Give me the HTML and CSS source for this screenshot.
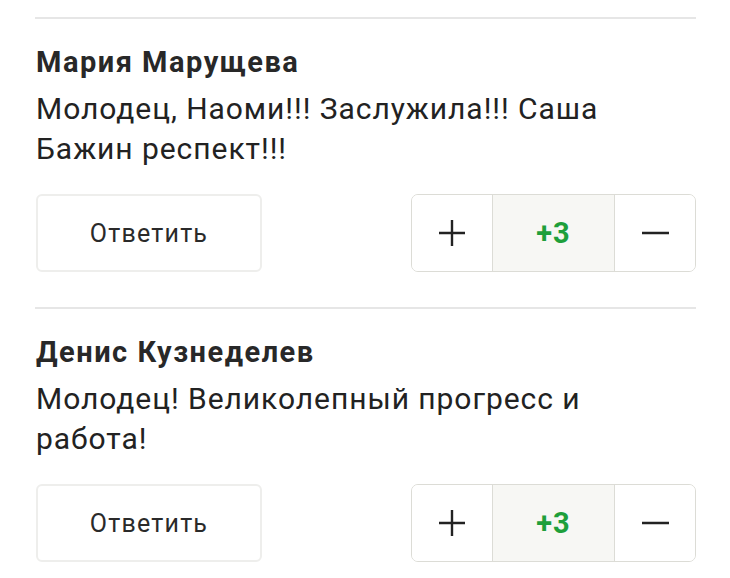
FILE: index.html
```html
<!DOCTYPE html>
<html lang="ru">
<head>
<meta charset="utf-8">
<link rel="stylesheet" href="styles.css">
</head>
<body>
<div class="list">
  <div class="comment">
    <div class="author">Мария Марущева</div>
    <div class="text">Молодец, Наоми!!! Заслужила!!! Саша Бажин респект!!!</div>
    <div class="actions">
      <button class="reply">Ответить</button>
      <div class="vote">
        <button class="vbtn">
          <svg width="28" height="28" viewBox="0 0 28 28"><path d="M14 1v26M1 14h26" stroke="#222" stroke-width="2.4" fill="none"/></svg>
        </button>
        <div class="score">+3</div>
        <button class="vbtn">
          <svg width="28" height="28" viewBox="0 0 28 28"><path d="M1 14h27" stroke="#222" stroke-width="2.6" fill="none"/></svg>
        </button>
      </div>
    </div>
  </div>
  <div class="comment">
    <div class="author">Денис Кузнеделев</div>
    <div class="text">Молодец! Великолепный прогресс и работа!</div>
    <div class="actions">
      <button class="reply">Ответить</button>
      <div class="vote">
        <button class="vbtn">
          <svg width="28" height="28" viewBox="0 0 28 28"><path d="M14 1v26M1 14h26" stroke="#222" stroke-width="2.4" fill="none"/></svg>
        </button>
        <div class="score">+3</div>
        <button class="vbtn">
          <svg width="28" height="28" viewBox="0 0 28 28"><path d="M1 14h27" stroke="#222" stroke-width="2.6" fill="none"/></svg>
        </button>
      </div>
    </div>
  </div>
</div>
</body>
</html>
```
FILE: styles.css
```css
html, body {
  margin: 0;
  padding: 0;
  background: #fff;
}
body {
  font-family: Roboto, "Noto Sans", Arial, sans-serif;
  color: #222;
}
.list {
  padding: 17px 34px 0 35px;
}
.comment {
  border-top: 2px solid #e6e6e6;
  padding: 23px 0 35px 1px;
}
.author {
  font-size: 29px;
  font-weight: 700;
  line-height: 40px;
  letter-spacing: 1.5px;
  color: #282828;
}
.text {
  margin-top: 7px;
  max-width: 640px;
  font-size: 30px;
  line-height: 40px;
  letter-spacing: 0.95px;
  color: #222;
}
.actions {
  margin-top: 25px;
  display: flex;
  justify-content: space-between;
  align-items: stretch;
  height: 78px;
}
.reply {
  width: 226px;
  box-sizing: border-box;
  height: 78px;
  background: #fff;
  border: 2px solid #eeeeec;
  border-radius: 6px;
  font-family: Roboto, sans-serif;
  font-size: 25px;
  letter-spacing: 1.2px;
  color: #2a2a2a;
  padding: 0;
}
.vote {
  display: flex;
  width: 285px;
  box-sizing: border-box;
  border: 1.5px solid #dcdcd6;
  border-radius: 7px;
  overflow: hidden;
}
.vbtn {
  width: 80px;
  flex: none;
  background: #fff;
  border: 0;
  padding: 0;
  display: flex;
  align-items: center;
  justify-content: center;
}
.score {
  flex: 1;
  background: #f7f7f4;
  border-left: 1.5px solid #dcdcd6;
  border-right: 1.5px solid #dcdcd6;
  display: flex;
  align-items: center;
  justify-content: center;
  font-size: 29px;
  font-weight: 700;
  letter-spacing: 1px;
  color: #1e9f3b;
}
```
